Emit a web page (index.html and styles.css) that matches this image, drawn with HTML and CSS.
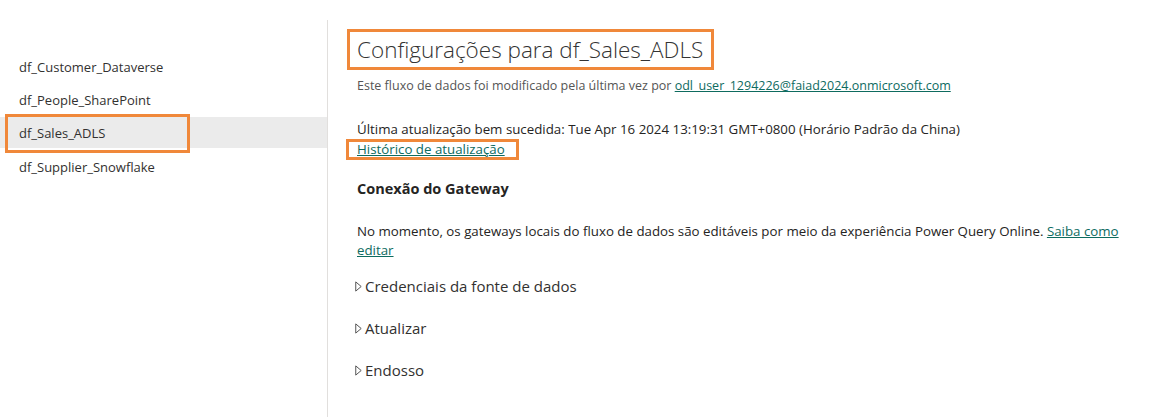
FILE: index.html
```html
<!DOCTYPE html>
<html lang="pt">
<head>
<meta charset="utf-8">
<link rel="stylesheet" href="styles.css">
</head>
<body>
<div class="page">
  <nav class="sidebar">
    <div class="item">df_Customer_Dataverse</div>
    <div class="item">df_People_SharePoint</div>
    <div class="item selected"><span class="hl-box">df_Sales_ADLS</span></div>
    <div class="item">df_Supplier_Snowflake</div>
  </nav>
  <main class="content">
    <h1 class="title"><span class="title-box">Configurações para df_Sales_ADLS</span></h1>
    <p class="modified">Este fluxo de dados foi modificado pela última vez por <a class="link" href="#">odl_user_1294226@faiad2024.onmicrosoft.com</a></p>
    <p class="last-refresh">Última atualização bem sucedida: Tue Apr 16 2024 13:19:31 GMT+0800 (Horário Padrão da China)</p>
    <div class="history"><a class="link history-box" href="#">Histórico de atualização</a></div>
    <h2 class="section">Conexão do Gateway</h2>
    <p class="para">No momento, os gateways locais do fluxo de dados são editáveis por meio da experiência Power Query Online. <a class="link" href="#">Saiba como editar</a></p>
    <div class="collapsible"><svg class="tri" width="7" height="11" viewBox="0 0 7 11"><path d="M0.75 0.9 L6.2 5.5 L0.75 10.1 Z" fill="none" stroke="#555" stroke-width="1"/></svg><span>Credenciais da fonte de dados</span></div>
    <div class="collapsible"><svg class="tri" width="7" height="11" viewBox="0 0 7 11"><path d="M0.75 0.9 L6.2 5.5 L0.75 10.1 Z" fill="none" stroke="#555" stroke-width="1"/></svg><span>Atualizar</span></div>
    <div class="collapsible"><svg class="tri" width="7" height="11" viewBox="0 0 7 11"><path d="M0.75 0.9 L6.2 5.5 L0.75 10.1 Z" fill="none" stroke="#555" stroke-width="1"/></svg><span>Endosso</span></div>
  </main>
</div>
</body>
</html>
```
FILE: styles.css
```css
html, body {
  margin: 0;
  padding: 0;
  background: #ffffff;
}
body {
  font-family: "Open Sans", "Noto Sans", "Liberation Sans", sans-serif;
  color: #252423;
  width: 1162px;
  height: 417px;
  overflow: hidden;
}
.page {
  display: flex;
  height: 417px;
}
.sidebar {
  width: 328px;
  flex: none;
  margin-top: 20px;
  padding-top: 30px;
  border-right: 1px solid #e1dfdd;
  box-sizing: border-box;
  display: flex;
  flex-direction: column;
}
.item {
  height: 33px;
  display: flex;
  align-items: center;
  padding-left: 19px;
  font-size: 13px;
  color: #323130;
  position: relative;
}
.item.selected {
  background: #ebebeb;
  height: 31px;
  margin-top: 1px;
  margin-bottom: 2px;
}
.hl-box {
  position: relative;
}
.hl-box::after {
  content: "";
  position: absolute;
  left: -14px;
  top: -10px;
  width: 185px;
  height: 39px;
  border: 3px solid #f0883a;
  box-sizing: border-box;
}
.content {
  flex: 1;
  padding-left: 29px;
  padding-top: 29px;
}
.title {
  margin: 0;
  font-size: 22.5px;
  font-weight: 300;
  color: #333333;
  line-height: 41px;
}
.title-box {
  display: inline-block;
  border: 3px solid #f0883a;
  padding: 0 8px 0 7px;
  margin-left: -10px;
  line-height: 35px;
}
.modified {
  margin: 8px 0 0 0;
  font-size: 12.5px;
  color: #555555;
  line-height: 16px;
}
.link {
  color: #0e6b5f;
  text-decoration: underline;
}
.last-refresh {
  margin: 26px 0 0 0;
  font-size: 13.3px;
  color: #252423;
  line-height: 18px;
}
.history {
  margin-top: 1px;
  line-height: 18px;
  font-size: 13.3px;
}
.history-box {
  display: inline-block;
  border: 3px solid #f0883a;
  margin-left: -11px;
  padding: 0 11px 0 8px;
  line-height: 15px;
}
.section {
  margin: 19px 0 0 0;
  font-size: 14.5px;
  font-weight: 700;
  color: #252423;
  line-height: 20px;
}
.para {
  margin: 23px 0 0 0;
  font-size: 13.3px;
  line-height: 19px;
  color: #252423;
  width: 780px;
}
.collapsible {
  display: flex;
  align-items: center;
  gap: 3px;
  margin-top: 15px;
  font-size: 15px;
  color: #323130;
  line-height: 22px;
  height: 22px;
}
.collapsible + .collapsible {
  margin-top: 20px;
}
.tri {
  flex: none;
  margin-left: -2px;
}
```
